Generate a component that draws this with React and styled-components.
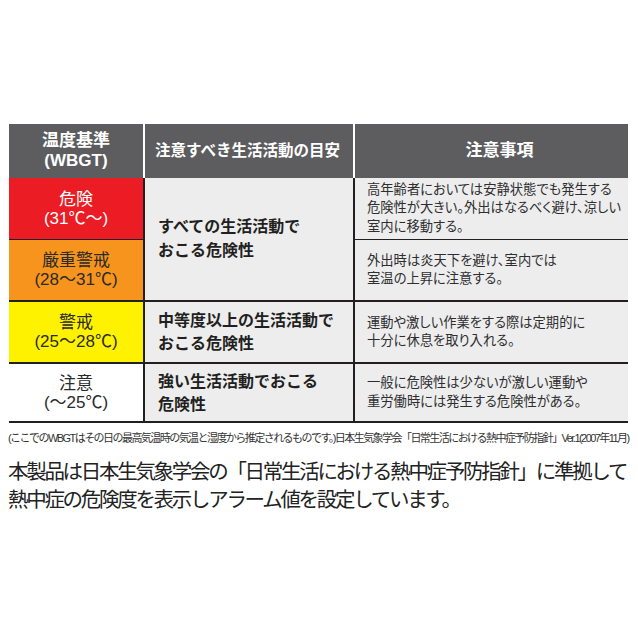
import React from "react";
import styled, { createGlobalStyle } from "styled-components";

const Global = createGlobalStyle`
  html, body { margin: 0; padding: 0; background: #ffffff; }
  body { font-family: "Liberation Sans", "Noto Sans CJK JP", sans-serif; }
`;

const Page = styled.div`
  width: 638px;
  height: 638px;
  box-sizing: border-box;
  padding: 124px 10px 0 9px;
  display: flex;
  flex-direction: column;
`;

const COLS = "134px 208px 273px";

const HeaderRow = styled.div`
  display: grid;
  grid-template-columns: ${COLS};
  column-gap: 2px;
  height: 54px;
  background: #ffffff;
`;

const HeadCell = styled.div`
  background: #5d5d5f;
  color: #ffffff;
  font-weight: bold;
  font-size: ${(p) => p.$size || 15.5}px;
  line-height: 20px;
  display: flex;
  flex-direction: column;
  justify-content: center;
  align-items: ${(p) => (p.$left ? "flex-start" : "center")};
  text-align: ${(p) => (p.$left ? "left" : "center")};
  padding-left: ${(p) => p.$pl || 0}px;
`;

const Body = styled.div`
  display: grid;
  grid-template-columns: ${COLS};
  grid-template-rows: 61px 61px 62px 59px;
  column-gap: 2px;
  background: #231f20;
  border-bottom: 2px solid #231f20;
`;

const LEVEL = {
  red: { bg: "#ec1c24", fg: "#ffffff" },
  orange: { bg: "#f7941d", fg: "#2a2a2a" },
  yellow: { bg: "#fff200", fg: "#2a2a2a" },
  white: { bg: "#ffffff", fg: "#2a2a2a" },
};

const LevelCell = styled.div`
  grid-column: 1;
  grid-row: ${(p) => p.$row};
  margin-top: ${(p) => p.$sep}px;
  background: ${(p) => LEVEL[p.$level].bg};
  color: ${(p) => LEVEL[p.$level].fg};
  font-size: 17px;
  line-height: 19px;
  display: flex;
  flex-direction: column;
  justify-content: center;
  align-items: center;
  text-align: center;
`;

const ActivityCell = styled.div`
  grid-column: 2;
  grid-row: ${(p) => p.$row};
  margin-top: ${(p) => p.$sep}px;
  background: #ededee;
  color: #231f20;
  font-weight: bold;
  font-size: 16px;
  line-height: ${(p) => p.$lh || 23}px;
  display: flex;
  flex-direction: column;
  justify-content: center;
  padding-left: 13px;
`;

const NoteCell = styled.div`
  grid-column: 3;
  grid-row: ${(p) => p.$row};
  margin-top: ${(p) => p.$sep}px;
  background: #ededee;
  color: #2e2e2e;
  font-size: 13.3px;
  line-height: 18.5px;
  font-feature-settings: "palt";
  white-space: nowrap;
  display: flex;
  flex-direction: column;
  justify-content: center;
  padding-left: 12px;
`;

const Footnote = styled.div`
  margin-top: 8px;
  margin-left: -1px;
  font-size: 11px;
  line-height: 14px;
  letter-spacing: -1.55px;
  color: #333333;
  white-space: nowrap;
`;

const Lead = styled.p`
  margin: 11px 0 0 -1px;
  font-family: "Noto Sans CJK JP", sans-serif;
  font-size: 20.5px;
  line-height: 28px;
  letter-spacing: -2.3px;
  color: #222222;
  white-space: nowrap;
`;

export default function App() {
  return (
    <>
      <Global />
      <Page>
        <HeaderRow>
          <HeadCell $size={17}>
            <span>温度基準</span>
            <span>(WBGT)</span>
          </HeadCell>
          <HeadCell $left $pl={10}>注意すべき生活活動の目安</HeadCell>
          <HeadCell $size={17} $pl={16}>注意事項</HeadCell>
        </HeaderRow>
        <Body>
          <LevelCell $row={1} $sep={0} $level="red">
            <span>危険</span>
            <span>(31℃〜)</span>
          </LevelCell>
          <LevelCell $row={2} $sep={1} $level="orange">
            <span>厳重警戒</span>
            <span>(28〜31℃)</span>
          </LevelCell>
          <LevelCell $row={3} $sep={2} $level="yellow">
            <span>警戒</span>
            <span>(25〜28℃)</span>
          </LevelCell>
          <LevelCell $row={4} $sep={2} $level="white">
            <span>注意</span>
            <span>(〜25℃)</span>
          </LevelCell>

          <ActivityCell $row="1 / span 2" $sep={0} $lh={24}>
            <span>すべての生活活動で</span>
            <span>おこる危険性</span>
          </ActivityCell>
          <ActivityCell $row={3} $sep={2}>
            <span>中等度以上の生活活動で</span>
            <span>おこる危険性</span>
          </ActivityCell>
          <ActivityCell $row={4} $sep={2}>
            <span>強い生活活動でおこる</span>
            <span>危険性</span>
          </ActivityCell>

          <NoteCell $row={1} $sep={0}>
            <span>高年齢者においては安静状態でも発生する</span>
            <span>危険性が大きい。外出はなるべく避け、涼しい</span>
            <span>室内に移動する。</span>
          </NoteCell>
          <NoteCell $row={2} $sep={1}>
            <span>外出時は炎天下を避け、室内では</span>
            <span>室温の上昇に注意する。</span>
          </NoteCell>
          <NoteCell $row={3} $sep={2}>
            <span>運動や激しい作業をする際は定期的に</span>
            <span>十分に休息を取り入れる。</span>
          </NoteCell>
          <NoteCell $row={4} $sep={2}>
            <span>一般に危険性は少ないが激しい運動や</span>
            <span>重労働時には発生する危険性がある。</span>
          </NoteCell>
        </Body>
        <Footnote>
          (ここでのWBGTはその日の最高気温時の気温と湿度から推定されるものです。)日本生気象学会「日常生活における熱中症予防指針」Ver.1(2007年11月)
        </Footnote>
        <Lead>
          本製品は日本生気象学会の「日常生活における熱中症予防指針」に準拠して
          <br />
          熱中症の危険度を表示しアラーム値を設定しています。
        </Lead>
      </Page>
    </>
  );
}
